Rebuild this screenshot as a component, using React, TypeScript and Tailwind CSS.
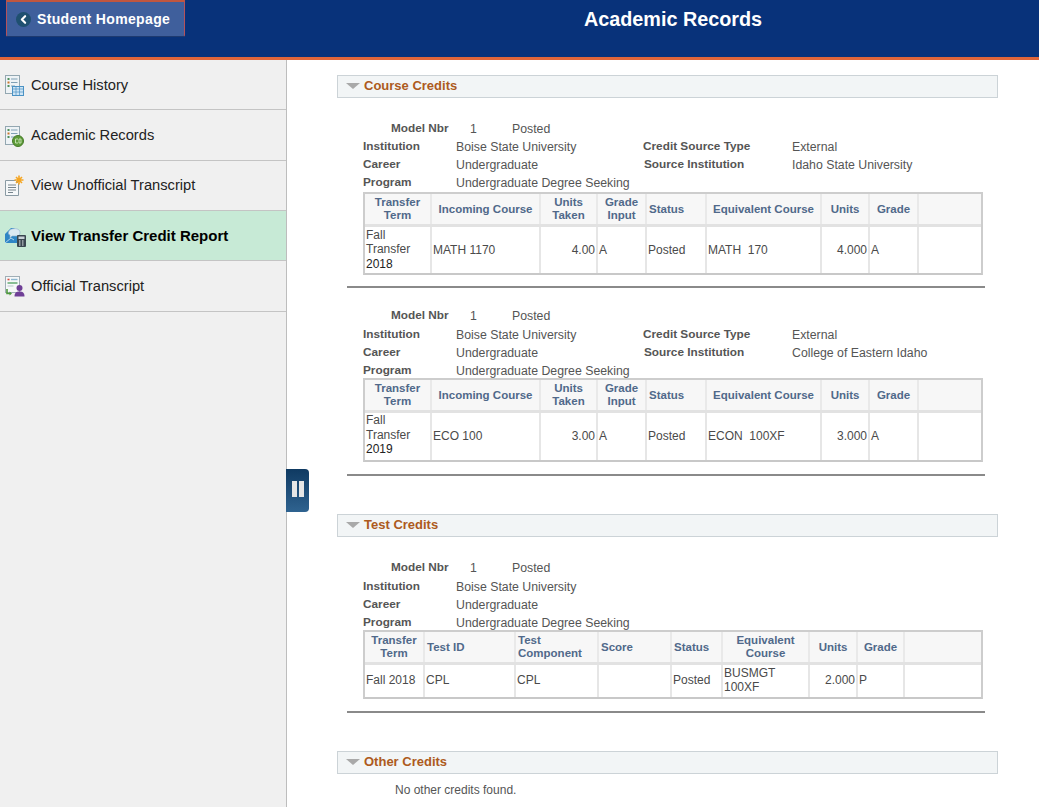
import { ChevronLeft } from 'lucide-react';

const font = 'font-["Liberation_Sans",Arial,sans-serif]';

const DocBase = () => (
  <>
    <rect x="1.5" y="1.5" width="14" height="18" fill="#eef3f6" stroke="#93a7b1" />
    <rect x="3.5" y="4" width="2" height="2" fill="#4f8f5a" />
    <rect x="3.5" y="7.5" width="2" height="2" fill="#c9772d" />
    <rect x="3.5" y="11" width="2" height="2" fill="#4f8f5a" />
    <path d="M7 5h6.5M7 8.5h6.5M7 12h4" stroke="#7fa0b5" />
  </>
);

const HistoryIcon = () => (
  <svg width="20" height="22" viewBox="0 0 20 22">
    <DocBase />
    <rect x="8.5" y="12.5" width="11" height="9" fill="#cfe5f5" stroke="#4a92c4" />
    <path d="M8.5 15h11M8.5 18h11M12 12.5v9M15.5 12.5v9" stroke="#4a92c4" strokeWidth="0.7" />
  </svg>
);

const RecordsIcon = () => (
  <svg width="20" height="22" viewBox="0 0 20 22">
    <DocBase />
    <circle cx="14" cy="16" r="5.5" fill="#5c9a38" stroke="#467a29" />
    <path d="M11.5 14h2.5M11.5 18h2.5M11.5 14v4M15 14v4h2v-4z" stroke="#d9efc9" strokeWidth="0.8" fill="none" />
  </svg>
);

const UnofficialIcon = () => (
  <svg width="20" height="22" viewBox="0 0 20 22">
    <path d="M1.5 5.5h10l3 3v12h-13z" fill="#f6f8f9" stroke="#8a9aa3" />
    <path d="M4 10h8M4 12.5h8M4 15h8M4 17.5h5" stroke="#76848c" />
    <path d="M15 0.5v9M10.5 5h9M12 2l6 6M18 2l-6 6" stroke="#f5a623" strokeWidth="1.6" />
  </svg>
);

const TransferIcon = () => (
  <svg width="22" height="22" viewBox="0 0 22 22">
    <path d="M1 9l6-6h3l5 5v10H1z" fill="#2f86c5" />
    <path d="M5 6c2-3 8-3 10-1s1 6-2 6H8l-2 2 0-3C4 9.5 4 7.5 5 6z" fill="#dce9f2" stroke="#8fb2cc" strokeWidth="0.6" />
    <path d="M1 18l6-5 3 2" stroke="#bcdcf2" strokeWidth="0.9" fill="none" />
    <rect x="13" y="10" width="9" height="12" rx="1" fill="#3a4750" />
    <rect x="14.5" y="11.5" width="6" height="2.5" fill="#c9d3d9" />
    <path d="M15 16h1.5M18 16h1.5M15 18h1.5M18 18h1.5M15 20h1.5M18 20h1.5" stroke="#e8edf0" />
  </svg>
);

const OfficialIcon = () => (
  <svg width="22" height="22" viewBox="0 0 22 22">
    <rect x="1.5" y="1.5" width="14" height="16" fill="#f6f8f9" stroke="#a0aeb6" />
    <path d="M3.5 4.5h2" stroke="#d8483b" strokeWidth="1.6" />
    <path d="M7 4.5h6.5" stroke="#8db7d0" strokeWidth="1.4" />
    <path d="M3.5 8h10" stroke="#5aa469" strokeWidth="1.4" />
    <path d="M3.5 11h6" stroke="#b9c4cb" />
    <path d="M3 14v4.5h3.5" stroke="#4f9a3c" strokeWidth="1.6" fill="none" />
    <path d="M5.5 16.5l2.5 2-2.5 2z" fill="#4f9a3c" />
    <circle cx="15.5" cy="13" r="3" fill="#6f3f96" />
    <path d="M10.5 21.5c0-4 2-5 5-5s5 1 5 5z" fill="#6f3f96" />
  </svg>
);

const navItems = [
  { label: 'Course History', icon: <HistoryIcon />, h: 'h-[50px] pt-[1px]' },
  { label: 'Academic Records', icon: <RecordsIcon />, h: 'h-[51px] pt-[1px]' },
  { label: 'View Unofficial Transcript', icon: <UnofficialIcon />, h: 'h-[50px]' },
  { label: 'View Transfer Credit Report', icon: <TransferIcon />, h: 'h-[50px] pt-[1px]', active: true },
  { label: 'Official Transcript', icon: <OfficialIcon />, h: 'h-[51px]' },
];

const SectionHeader = ({ title, className }: { title: string; className: string }) => (
  <div className={`flex h-[23px] w-[661px] items-center border border-[#ccd3d7] bg-[#f2f5f6] pl-[8px] ${className}`}>
    <span className="mb-[2px] h-0 w-0 border-x-[7px] border-t-[6px] border-x-transparent border-t-[#a9a9a9]" />
    <span className="mb-[2px] ml-[4px] text-[13px] font-bold text-[#ad5a20]">{title}</span>
  </div>
);

const Fields = ({ source, tight }: { source?: string; tight?: boolean }) => (
  <div className="ml-[26px] w-[620px] text-[12.3px] text-[#555]">
    <div className={`flex items-start ${tight ? 'h-[19px]' : 'h-[18px]'}`}>
      <span className="ml-[28px] w-[79px] text-[11.8px] font-bold">Model Nbr</span>
      <span className="w-[42px]">1</span>
      <span>Posted</span>
    </div>
    <div className="grid h-[18px] grid-cols-[93px_187px_149px_1fr] items-start">
      <span className="text-[11.8px] font-bold">Institution</span>
      <span>Boise State University</span>
      {source && <span className="text-[11.8px] font-bold">Credit Source Type</span>}
      {source && <span>External</span>}
    </div>
    <div className="grid h-[18px] grid-cols-[93px_187px_149px_1fr] items-start">
      <span className="text-[11.8px] font-bold">Career</span>
      <span>Undergraduate</span>
      {source && <span className="ml-[1px] text-[11.8px] font-bold">Source Institution</span>}
      {source && <span>{source}</span>}
    </div>
    <div className={`grid grid-cols-[93px_1fr] items-start ${tight ? 'h-[16px]' : 'h-[18px]'}`}>
      <span className="text-[11.8px] font-bold">Program</span>
      <span>Undergraduate Degree Seeking</span>
    </div>
  </div>
);

type Col = { width: string; head: React.ReactNode; align?: string };

const CreditTable = ({
  cols,
  cells,
  bodyH,
  cellPad,
}: {
  cols: Col[];
  cells: { text: React.ReactNode; right?: boolean }[];
  bodyH: string;
  cellPad: string;
}) => (
  <div className="ml-[26px] w-[620px] border-2 border-[#cdcdcd] border-b-[#c8c8c8]">
    <table className="w-full table-fixed border-collapse text-[12px] text-[#4a4a4a]">
      <colgroup>
        {cols.map((c, i) => (
          <col key={i} className={c.width} />
        ))}
        <col />
      </colgroup>
      <thead>
        <tr className="h-[31px] border-b-[3px] border-[#e2e2e2] bg-[#f7f7f7]">
          {cols.map((c, i) => (
            <th
              key={i}
              className={`border-r-2 border-[#e9e9e9] px-[2px] pt-[1px] text-[11.5px] leading-[13px] font-bold text-[#50698a] ${c.align ?? 'text-center'}`}
            >
              {c.head}
            </th>
          ))}
          <th />
        </tr>
      </thead>
      <tbody>
        <tr className={bodyH}>
          {cells.map((c, i) => (
            <td
              key={i}
              className={`border-r-2 border-[#e6e6e6] px-[1px] leading-[14.5px] ${cellPad} ${c.right ? 'text-right' : 'text-left'}`}
            >
              {c.text}
            </td>
          ))}
          <td />
        </tr>
      </tbody>
    </table>
  </div>
);

const Rule = ({ className }: { className: string }) => (
  <div className={`ml-[10px] h-[2px] w-[638px] bg-[#8a8a8a] ${className}`} />
);

const transferCols: Col[] = [
  { width: 'w-[66px]', head: <>Transfer<br />Term</> },
  { width: 'w-[109px]', head: 'Incoming Course' },
  { width: 'w-[57px]', head: <>Units<br />Taken</> },
  { width: 'w-[49px]', head: <>Grade<br />Input</> },
  { width: 'w-[60px]', head: 'Status', align: 'text-left' },
  { width: 'w-[115px]', head: 'Equivalent Course' },
  { width: 'w-[48px]', head: 'Units' },
  { width: 'w-[49px]', head: 'Grade' },
];

const testCols: Col[] = [
  { width: 'w-[59px]', head: <>Transfer<br />Term</> },
  { width: 'w-[91px]', head: 'Test ID', align: 'text-left' },
  { width: 'w-[83px]', head: <>Test<br />Component</>, align: 'text-left' },
  { width: 'w-[73px]', head: 'Score', align: 'text-left' },
  { width: 'w-[51px]', head: 'Status', align: 'text-left' },
  { width: 'w-[87px]', head: <>Equivalent<br />Course</> },
  { width: 'w-[48px]', head: 'Units' },
  { width: 'w-[47px]', head: 'Grade' },
];

const transferRow = (year: string, incoming: string, taken: string, equiv: string, units: string) => [
  { text: <div className="mb-[2px]">Fall<br />Transfer<br /><span className="text-[#222]">{year}</span></div> },
  { text: incoming },
  { text: taken, right: true },
  { text: 'A' },
  { text: 'Posted' },
  { text: <span className="whitespace-pre">{equiv}</span> },
  { text: units, right: true },
  { text: 'A' },
];

const App = () => {
  return (
    <div className={`relative flex h-screen flex-col overflow-hidden bg-white ${font}`}>
      <header className="flex h-[60px] shrink-0 border-b-[3px] border-[#e0663a] bg-[#08327a]">
        <div className="ml-[6px] flex h-[37px] w-[179px] items-center rounded-b-[2px] border-x border-t-2 border-b border-[#b5525a] border-b-[#1d3a70] border-t-[#c0563f] bg-[#3f5f9c] pt-[1px] pl-[9px]">
          <span className="flex h-[15px] w-[15px] items-center justify-center rounded-full bg-[#1f5070]">
            <ChevronLeft size={13} strokeWidth={4} className="text-white" />
          </span>
          <span className="ml-[6px] text-[14px] font-bold tracking-[0.35px] text-white">Student Homepage</span>
        </div>
        <h1 className="ml-[399px] pt-[5px] text-[19.8px] font-bold text-white">Academic Records</h1>
      </header>

      <div className="flex min-h-0 flex-1">
        <nav className="w-[287px] shrink-0 border-r border-[#bdbdbd] bg-[#f0f0f0]">
          {navItems.map((item) => (
            <div
              key={item.label}
              className={`flex items-center border-b border-[#c4c4c4] pl-[4px] ${item.h} ${
                item.active ? 'bg-[#c7ead6] text-[15px] font-bold text-black' : 'text-[14.7px] text-[#222]'
              }`}
            >
              <span className="flex w-[27px] shrink-0">{item.icon}</span>
              {item.label}
            </div>
          ))}
        </nav>

        <main className="min-w-0 flex-1 pt-[15px] pl-[50px]">
          <SectionHeader title="Course Credits" className="" />
          <div className="mt-[22px]">
            <Fields source="Idaho State University" />
            <CreditTable
              cols={transferCols}
              cells={transferRow('2018', 'MATH 1170', '4.00', 'MATH  170', '4.000')}
              bodyH="h-[48px]"
              cellPad="pt-[1px]"
            />
          </div>
          <Rule className="mt-[11px]" />
          <div className="mt-[19px]">
            <Fields source="College of Eastern Idaho" tight />
            <CreditTable
              cols={transferCols}
              cells={transferRow('2019', 'ECO 100', '3.00', 'ECON  100XF', '3.000')}
              bodyH="h-[49px]"
              cellPad="pb-[1px]"
            />
          </div>
          <Rule className="mt-[12px]" />

          <SectionHeader title="Test Credits" className="mt-[38px]" />
          <div className="mt-[22px]">
            <Fields tight />
            <CreditTable
              cols={testCols}
              cells={[
                { text: 'Fall 2018' },
                { text: 'CPL' },
                { text: 'CPL' },
                { text: '' },
                { text: 'Posted' },
                { text: <>BUSMGT<br />100XF</> },
                { text: '2.000', right: true },
                { text: 'P' },
              ]}
              bodyH="h-[34px]"
              cellPad="pb-[1px]"
            />
          </div>
          <Rule className="mt-[12px]" />

          <SectionHeader title="Other Credits" className="mt-[38px]" />
          <p className="mt-[7px] ml-[58px] text-[12px] text-[#555]">No other credits found.</p>
        </main>
      </div>

      <div className="absolute top-[469px] left-[286px] flex h-[43px] w-[23px] items-center justify-center gap-[2px] rounded-r-[4px] bg-gradient-to-b from-[#0f3a62] to-[#2f6390] pb-[3px]">
        <span className="h-[16px] w-[5px] bg-[#e6e6e6]" />
        <span className="h-[16px] w-[5px] bg-[#e6e6e6]" />
      </div>
    </div>
  );
};

export default App;
